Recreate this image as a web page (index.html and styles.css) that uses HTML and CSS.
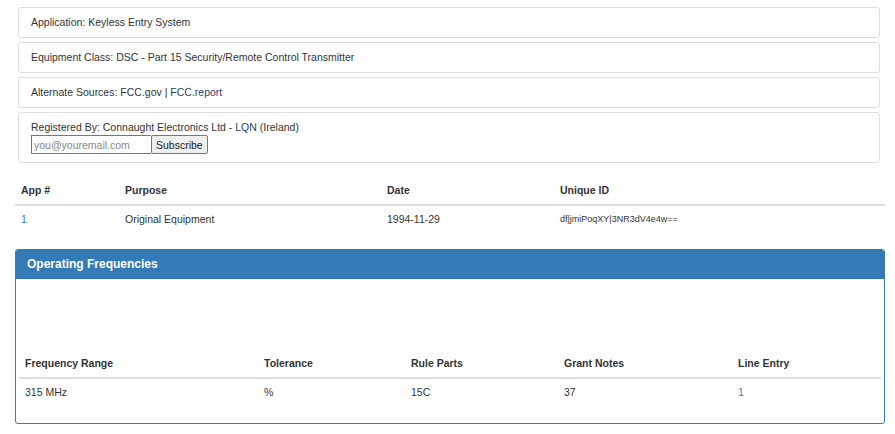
FILE: index.html
```html
<!DOCTYPE html>
<html lang="en">
<head>
    <meta charset="UTF-8">
    <meta name="viewport" content="width=device-width, initial-scale=1.0">
    <title>FCC ID Details</title>
    <link rel="stylesheet" href="styles.css">
</head>
<body>
    <div class="page">
        <ul class="info-list">
            <li class="info-item">Application: Keyless Entry System</li>
            <li class="info-item">Equipment Class: DSC - Part 15 Security/Remote Control Transmitter</li>
            <li class="info-item">Alternate Sources: FCC.gov | <a class="dark-link" href="#">FCC.report</a></li>
            <li class="info-item">
                Registered By: Connaught Electronics Ltd - <a class="dark-link" href="#">LQN</a> (Ireland)
                <form class="subscribe">
                    <input type="email" placeholder="you@youremail.com">
                    <button type="button">Subscribe</button>
                </form>
            </li>
        </ul>

        <table class="data-table apps">
            <thead>
                <tr>
                    <th class="c-app">App #</th>
                    <th class="c-purpose">Purpose</th>
                    <th class="c-date">Date</th>
                    <th>Unique ID</th>
                </tr>
            </thead>
            <tbody>
                <tr>
                    <td><a href="#">1</a></td>
                    <td>Original Equipment</td>
                    <td>1994-11-29</td>
                    <td class="uid">df|jmiPoqXY|3NR3dV4e4w==</td>
                </tr>
            </tbody>
        </table>

        <div class="panel">
            <div class="panel-heading">Operating Frequencies</div>
            <div class="panel-body">
                <div class="spacer"></div>
                <table class="data-table freqs">
                    <thead>
                        <tr>
                            <th class="c-range">Frequency Range</th>
                            <th class="c-tol">Tolerance</th>
                            <th class="c-rule">Rule Parts</th>
                            <th class="c-notes">Grant Notes</th>
                            <th>Line Entry</th>
                        </tr>
                    </thead>
                    <tbody>
                        <tr>
                            <td>315 MHz</td>
                            <td>%</td>
                            <td>15C</td>
                            <td>37</td>
                            <td><a href="#">1</a></td>
                        </tr>
                    </tbody>
                </table>
            </div>
        </div>
    </div>
</body>
</html>
```

FILE: styles.css
```css
* {
    margin: 0;
    padding: 0;
    box-sizing: border-box;
}

body {
    background: #fff;
    color: #333;
    font-family: 'Liberation Sans', Arial, Helvetica, sans-serif;
    font-size: 10.5px;
    line-height: 15px;
}

a {
    color: #337ab7;
    text-decoration: none;
}

.dark-link {
    color: #2c3e6b;
}

.page {
    padding: 7px 10px 0 15px;
}

.info-list {
    list-style: none;
    margin: 0 5px 14px 3px;
}

.info-item {
    border: 1px solid #ddd;
    border-radius: 3px;
    padding: 7px 12px;
    margin-bottom: 4px;
    min-height: 31px;
}

.info-item:last-child {
    margin-bottom: 0;
}

.subscribe {
    display: flex;
    margin-bottom: 1px;
}

.subscribe input {
    width: 120px;
    height: 19px;
    border: 1px solid #767676;
    border-right: none;
    padding: 0 2px;
    font-family: inherit;
    font-size: 10.5px;
    color: #333;
}

.subscribe input::placeholder {
    color: #888;
}

.subscribe button {
    height: 19px;
    padding: 0 4px;
    border: 1px solid #767676;
    border-radius: 2px;
    background: #efefef;
    color: #222;
    font-family: inherit;
    font-size: 10.5px;
}

.data-table {
    width: 100%;
    border-collapse: collapse;
}

.data-table th {
    text-align: left;
    font-weight: bold;
    padding: 6px;
    line-height: 15px;
    border-bottom: 2px solid #ddd;
}

.data-table td {
    padding: 6px;
    line-height: 15px;
}

.apps {
    margin-bottom: 16px;
}

.apps .c-app { width: 104px; }
.apps .c-purpose { width: 262px; }
.apps .c-date { width: 173px; }

.uid {
    font-size: 9px;
}

.panel {
    border: 1px solid #337ab7;
    border-radius: 3px;
    overflow: hidden;
}

.panel-heading {
    background: #337ab7;
    color: #fff;
    font-weight: bold;
    font-size: 12px;
    height: 29px;
    line-height: 29px;
    padding: 0 11px;
}

.panel-body {
    padding: 0 3px 17px;
}

.spacer {
    height: 71px;
}

.freqs .c-range { width: 239px; }
.freqs .c-tol { width: 147px; }
.freqs .c-rule { width: 153px; }
.freqs .c-notes { width: 174px; }
```
